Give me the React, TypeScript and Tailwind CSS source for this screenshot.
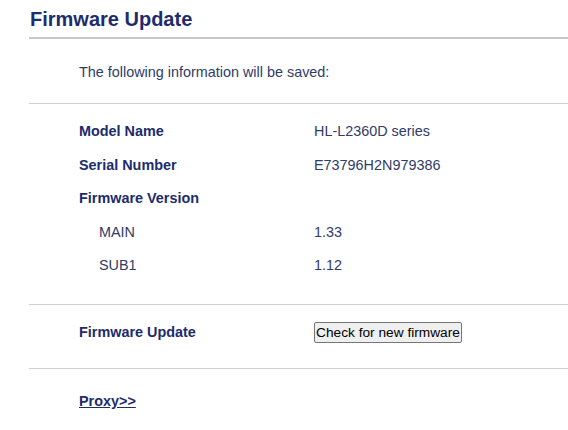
import React from 'react';

const INFO_ROWS = [
  { id: 'model', label: 'Model Name', value: 'HL-L2360D series', bold: true },
  { id: 'serial', label: 'Serial Number', value: 'E73796H2N979386', bold: true },
  { id: 'fw', label: 'Firmware Version', value: '', bold: true },
  { id: 'main', label: 'MAIN', value: '1.33', bold: false },
  { id: 'sub1', label: 'SUB1', value: '1.12', bold: false },
];

export default function App() {
  return (
    <div className="w-[568px] h-[430px] bg-white overflow-hidden pl-[29px] text-[#2f3b68] text-[14.4px] font-['Liberation_Sans',Arial,sans-serif]">
      {/* Page title */}
      <div className="h-[37px] flex items-center pl-px">
        <h1 className="text-[20px] font-bold leading-[24px] text-[#1c2c6c] mt-px">Firmware Update</h1>
      </div>
      <div className="h-[2px] bg-[#c8c8c8]" />

      <div className="h-[64px] pl-[50px] pt-[24px] leading-[18px]">The following information will be saved:</div>
      <div className="h-px bg-[#d2d2d2]" />

      {/* Device info */}
      <div className="pt-[10.75px] pb-[22px] pl-[50px]">
        {INFO_ROWS.map((row) => (
          <div key={row.id} className="h-[33.4px] flex items-center leading-[18px]">
            <div
              className={
                row.bold
                  ? 'w-[235px] font-bold text-[#1c2c6c]'
                  : 'w-[235px] pl-[20px]'
              }
            >
              {row.label}
            </div>
            <div>{row.value}</div>
          </div>
        ))}
      </div>
      <div className="h-px bg-[#d2d2d2]" />

      {/* Firmware update action */}
      <div className="pt-[17px] pb-[25px] pl-[50px] flex items-center leading-[18px]">
        <div className="w-[235px] font-bold text-[#1c2c6c]">Firmware Update</div>
        <button className="w-[148px] h-[21px] border border-[#767676] rounded-[2px] bg-[#efefef] text-black text-[13.7px] leading-[17px] font-['Liberation_Sans',Arial,sans-serif] p-0 whitespace-nowrap">
          Check for new firmware
        </button>
      </div>
      <div className="h-px bg-[#d2d2d2]" />

      <div className="pl-[50px] pt-[23px] leading-[18px]">
        <a href="#" className="font-bold text-[#1c2c6c] underline">Proxy&gt;&gt;</a>
      </div>
    </div>
  );
}
